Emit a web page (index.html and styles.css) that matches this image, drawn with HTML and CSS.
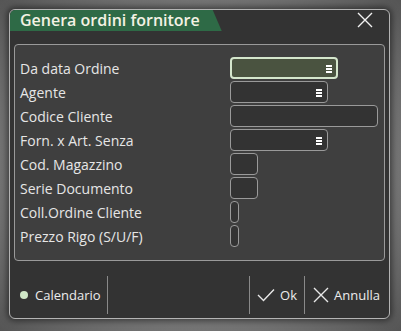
FILE: index.html
```html
<!DOCTYPE html>
<html lang="it">
<head>
  <meta charset="UTF-8">
  <title>Genera ordini fornitore</title>
  <link rel="stylesheet" href="styles.css">
</head>
<body>
  <div class="dialog">
    <div class="titlebar">
      <div class="title-tab">Genera ordini fornitore</div>
      <button class="close-btn" aria-label="Chiudi">
        <svg width="16" height="16" viewBox="0 0 16 16"><path d="M1 1 L15 15 M15 1 L1 15" stroke="#f2f2f2" stroke-width="1.4" fill="none"/></svg>
      </button>
    </div>
    <div class="content">
      <div class="panel">
        <div class="row">
          <label>Da data Ordine</label>
          <div class="field focused w-108"><span class="menu"></span></div>
        </div>
        <div class="row">
          <label>Agente</label>
          <div class="field w-98"><span class="menu"></span></div>
        </div>
        <div class="row">
          <label>Codice Cliente</label>
          <div class="field w-148"></div>
        </div>
        <div class="row">
          <label>Forn. x Art. Senza</label>
          <div class="field w-98"><span class="menu"></span></div>
        </div>
        <div class="row">
          <label>Cod. Magazzino</label>
          <div class="field w-28"></div>
        </div>
        <div class="row">
          <label>Serie Documento</label>
          <div class="field w-28"></div>
        </div>
        <div class="row">
          <label>Coll.Ordine Cliente</label>
          <div class="field w-8"></div>
        </div>
        <div class="row">
          <label>Prezzo Rigo (S/U/F)</label>
          <div class="field w-8"></div>
        </div>
      </div>
    </div>
    <div class="footer">
      <div class="footer-btn calendar"><span class="dot"></span>Calendario</div>
      <div class="spacer"></div>
      <div class="footer-btn ok">
        <svg width="18" height="14" viewBox="0 0 18 14"><path d="M1 7 L6.5 12.5 L17 1.5" stroke="#e8e8e8" stroke-width="1.4" fill="none"/></svg>
        Ok
      </div>
      <div class="footer-btn cancel">
        <svg width="16" height="16" viewBox="0 0 16 16"><path d="M1 1 L15 15 M15 1 L1 15" stroke="#e8e8e8" stroke-width="1.4" fill="none"/></svg>
        Annulla
      </div>
    </div>
  </div>
</body>
</html>
```
FILE: styles.css
```css
body {
  margin: 0;
  width: 401px;
  height: 331px;
  background: radial-gradient(ellipse at center, #7e7e7e 60%, #555555 100%);
  font-family: 'Open Sans', 'Noto Sans', sans-serif;
  box-sizing: border-box;
  padding: 9px 11px 12px 9px;
  overflow: hidden;
}

.dialog {
  width: 381px;
  height: 310px;
  box-sizing: border-box;
  background: #333333;
  border: 1px solid #b4b4b4;
  border-radius: 6px;
  box-shadow: 0 0 6px 2px rgba(0, 0, 0, 0.5);
  display: flex;
  flex-direction: column;
  overflow: hidden;
}

.titlebar {
  height: 21px;
  display: flex;
  align-items: stretch;
  justify-content: space-between;
}

.title-tab {
  background: #2e6a46;
  color: #f4f2e4;
  font-size: 16px;
  font-weight: 600;
  line-height: 21px;
  padding: 0 22px 0 10px;
  clip-path: polygon(0 0, calc(100% - 9px) 0, 100% 100%, 0 100%);
  border-top-left-radius: 5px;
}

.close-btn {
  background: none;
  border: none;
  padding: 0;
  margin: 2px 16px 0 0;
  width: 16px;
  height: 16px;
  cursor: pointer;
}

.content {
  padding: 13px 4px 0 4px;
}

.panel {
  height: 217px;
  box-sizing: border-box;
  background: #3f3f3f;
  border: 1px solid #9a9a9a;
  border-radius: 4px;
  padding: 11px 0 0 5px;
}

.row {
  display: flex;
  align-items: center;
  height: 24px;
}

.row label {
  width: 210px;
  color: #e6e6e6;
  font-size: 14px;
}

.field {
  height: 22px;
  box-sizing: border-box;
  background: #333333;
  border: 1px solid #9a9a9a;
  border-radius: 4px;
  display: flex;
  align-items: center;
  justify-content: flex-end;
  padding-right: 5px;
}

.field.focused {
  background: #4a5340;
  border: 2px solid #d4e6cc;
  padding-right: 4px;
}

.w-108 { width: 108px; }
.w-98 { width: 98px; }
.w-148 { width: 148px; }
.w-28 { width: 28px; }
.w-8 { width: 9px; }

.menu {
  width: 6px;
  height: 2px;
  background: #ffffff;
  box-shadow: 0 -3px 0 #ffffff, 0 3px 0 #ffffff;
  margin-top: 1px;
}

.footer {
  flex: 1;
  display: flex;
  align-items: flex-end;
  padding: 0 0 4px 0;
}

.footer-btn {
  display: flex;
  align-items: center;
  gap: 5px;
  color: #ececec;
  font-size: 13px;
  height: 38px;
}

.calendar {
  padding: 0 6px 0 10px;
  border-right: 1px solid #8a8a8a;
}

.dot {
  width: 8px;
  height: 8px;
  border-radius: 50%;
  background: #cfe6c6;
  margin-right: 2px;
}

.spacer {
  flex: 1;
  height: 38px;
  border-right: 1px solid #8a8a8a;
}

.ok {
  padding: 0 7px 0 7px;
  border-right: 1px solid #8a8a8a;
}

.cancel {
  padding: 0 9px 0 8px;
}
```
